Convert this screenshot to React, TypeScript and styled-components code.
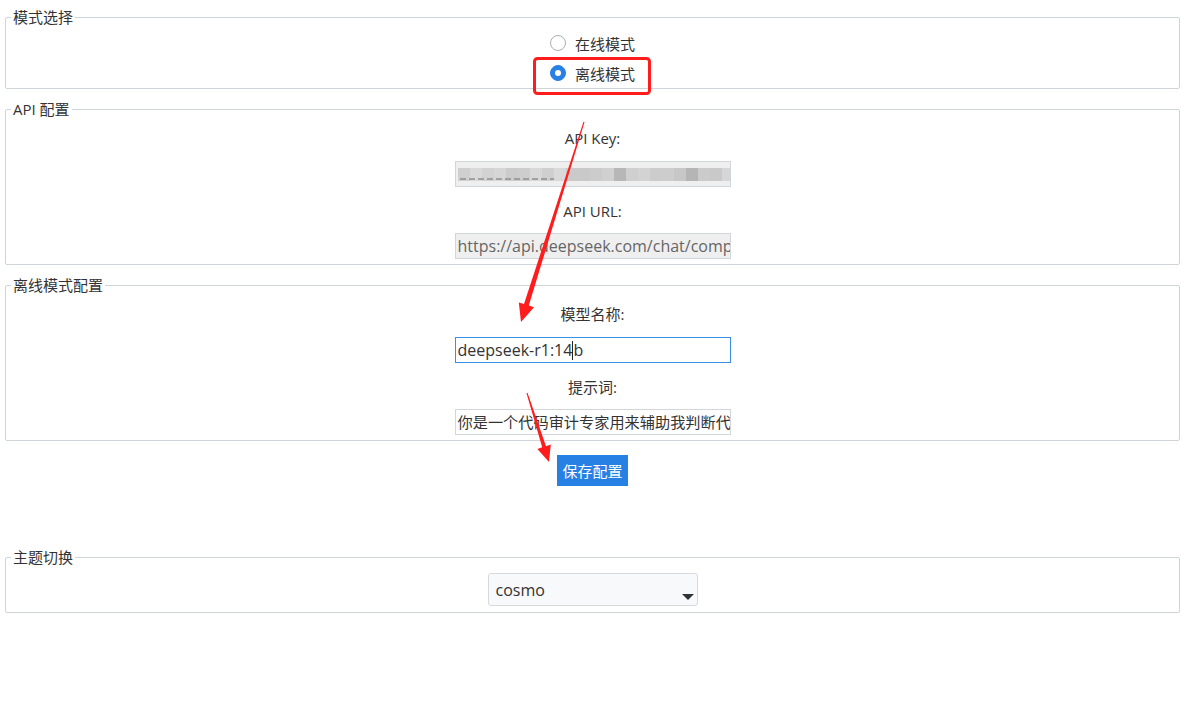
import React from "react";
import styled, { createGlobalStyle } from "styled-components";

const GlobalStyle = createGlobalStyle`
  html, body { margin: 0; padding: 0; background: #fff; }
  body {
    font-family: "Open Sans", "Noto Sans CJK SC", sans-serif;
    color: #333;
  }
`;

const Page = styled.div`
  position: relative;
  width: 1185px;
  height: 706px;
  box-sizing: border-box;
  padding: 7px 5px 0;
  display: flex;
  flex-direction: column;
  align-items: stretch;
`;

const Fieldset = styled.fieldset<{ $mb?: number }>`
  margin: 0 0 ${(p) => p.$mb ?? 0}px;
  padding: 0;
  min-width: 0;
  border: 1px solid #ced4da;
  border-radius: 2px;
  display: flex;
  flex-direction: column;
  align-items: center;
`;

const Legend = styled.legend`
  margin-left: 5px;
  padding: 0 2px;
  font-size: 15px;
  line-height: 20px;
  color: #333;
`;

const RadioList = styled.div`
  padding-top: 1px;
  display: flex;
  flex-direction: column;
  align-items: center;
`;

const RadioRow = styled.label`
  height: 30px;
  display: flex;
  align-items: center;
  gap: 9px;
  font-size: 15px;
  color: #333;
`;

const RadioDot = styled.span<{ $checked?: boolean }>`
  width: 16px;
  height: 16px;
  box-sizing: border-box;
  border-radius: 50%;
  border: 1px solid ${(p) => (p.$checked ? "#2780e3" : "#a9afb6")};
  background: ${(p) => (p.$checked ? "#2780e3" : "#fff")};
  display: flex;
  align-items: center;
  justify-content: center;
  &::after {
    content: "";
    width: 6px;
    height: 6px;
    border-radius: 50%;
    background: #fff;
    display: ${(p) => (p.$checked ? "block" : "none")};
  }
`;

const FieldBody = styled.div<{ $pb?: number }>`
  padding: 9px 0 ${(p) => p.$pb ?? 5}px;
  display: flex;
  flex-direction: column;
  align-items: center;
`;

const Label = styled.div<{ $mt?: number; $mb?: number }>`
  margin: ${(p) => p.$mt ?? 0}px 0 ${(p) => p.$mb ?? 13}px;
  font-size: 15px;
  line-height: 20px;
  color: #333;
`;

const TextBox = styled.div<{ $variant: "disabled" | "focused" | "plain"; $size?: number }>`
  width: 276px;
  height: 26px;
  box-sizing: border-box;
  padding: 0 2px;
  display: flex;
  align-items: center;
  overflow: hidden;
  white-space: nowrap;
  font-size: ${(p) => p.$size ?? 16}px;
  line-height: 24px;
  position: relative;
  border: 1px solid ${(p) => (p.$variant === "focused" ? "#3a8ee6" : "#d2d6da")};
  background: ${(p) => (p.$variant === "disabled" ? "#efefef" : "#fff")};
  color: ${(p) => (p.$variant === "disabled" ? "#666" : "#333")};
`;

const Caret = styled.span`
  display: inline-block;
  width: 1px;
  height: 19px;
  background: #222;
`;

const Mosaic = styled.div`
  display: flex;
  height: 13px;
  margin-top: 1px;
  position: relative;
`;

const Tile = styled.span`
  width: 12px;
  height: 13px;
  flex: none;
`;

const Dashes = styled.span`
  position: absolute;
  left: 2px;
  bottom: 1px;
  width: 94px;
  height: 2px;
  background: repeating-linear-gradient(
    90deg,
    #8a8a8a 0 6px,
    transparent 6px 9px
  );
  opacity: 0.7;
`;

const SaveButton = styled.button`
  margin: 14px auto 61px;
  height: 31px;
  padding: 0 5px;
  border: none;
  background: #2780e3;
  color: #fff;
  font-family: "Noto Sans CJK SC", sans-serif;
  font-size: 15px;
  line-height: 31px;
  cursor: pointer;
`;

const SelectBody = styled.div`
  padding: 6px 0 6px;
  display: flex;
  justify-content: center;
`;

const SelectBox = styled.div`
  width: 210px;
  height: 33px;
  box-sizing: border-box;
  border: 1px solid #d6dadf;
  border-radius: 3px;
  background: #f8f9fa;
  padding: 0 3px 0 7px;
  display: flex;
  justify-content: space-between;
  align-items: center;
  font-size: 16px;
  color: #333;
`;

const SelectCaret = styled.span`
  align-self: flex-end;
  margin-bottom: 5px;
  width: 0;
  height: 0;
  border-left: 6px solid transparent;
  border-right: 6px solid transparent;
  border-top: 6px solid #333;
`;

const Overlay = styled.svg`
  position: absolute;
  left: 0;
  top: 0;
  pointer-events: none;
`;

const tiles = [
  "#cfcfcf", "#d9d9d9", "#d2d2d2", "#d6d6d6", "#cbcbcb", "#cdcdcd", "#d8d8d8",
  "#cfcfcf", "#d9d9d9", "#cacaca", "#c9c9c9", "#cccccc", "#d0d0d0", "#b7b7b7",
  "#cfcfcf", "#d3d3d3", "#cccccc", "#cdcdcd", "#c7c7c7", "#b5b5b5", "#cbcbcb",
  "#c9c9c9", "#d6d6d6", "#dcdcdc",
];

export default function App() {
  return (
    <>
      <GlobalStyle />
      <Page>
        <Fieldset $mb={10}>
          <Legend>模式选择</Legend>
          <RadioList>
            <RadioRow>
              <RadioDot />
              在线模式
            </RadioRow>
            <RadioRow>
              <RadioDot $checked />
              离线模式
            </RadioRow>
          </RadioList>
        </Fieldset>

        <Fieldset $mb={10}>
          <Legend>API 配置</Legend>
          <FieldBody>
            <Label>API Key:</Label>
            <TextBox $variant="disabled">
              <Mosaic>
                {tiles.map((c, i) => (
                  <Tile key={i} style={{ background: c }} />
                ))}
                <Dashes />
              </Mosaic>
            </TextBox>
            <Label $mt={14} $mb={12}>API URL:</Label>
            <TextBox $variant="disabled">https://api.deepseek.com/chat/completions</TextBox>
          </FieldBody>
        </Fieldset>

        <Fieldset>
          <Legend>离线模式配置</Legend>
          <FieldBody>
            <Label>模型名称:</Label>
            <TextBox $variant="focused">
              deepseek-r1:14
              <Caret />
              b
            </TextBox>
            <Label $mt={14} $mb={12}>提示词:</Label>
            <TextBox $variant="plain" $size={15.2}>你是一个代码审计专家用来辅助我判断代码是否存在漏洞</TextBox>
          </FieldBody>
        </Fieldset>

        <SaveButton>保存配置</SaveButton>

        <Fieldset>
          <Legend>主题切换</Legend>
          <SelectBody>
            <SelectBox>
              cosmo
              <SelectCaret />
            </SelectBox>
          </SelectBody>
        </Fieldset>

        <Overlay width="1185" height="706" viewBox="0 0 1185 706">
          <rect x="534.5" y="58.5" width="115" height="35" rx="3" fill="none" stroke="#ff1c1c" strokeWidth="3" />
          <polygon
            fill="#ff1c1c"
            points="584.5,122.15 528.8,305.55 534.0,307.2 521,322 518.8,302.4 524.0,304.05 583.5,121.85"
          />
          <polygon
            fill="#ff1c1c"
            points="527.5,392.85 546.0,446.14 550.8,444.6 549,462 537.4,448.9 542.2,447.36 526.5,393.15"
          />
        </Overlay>
      </Page>
    </>
  );
}
